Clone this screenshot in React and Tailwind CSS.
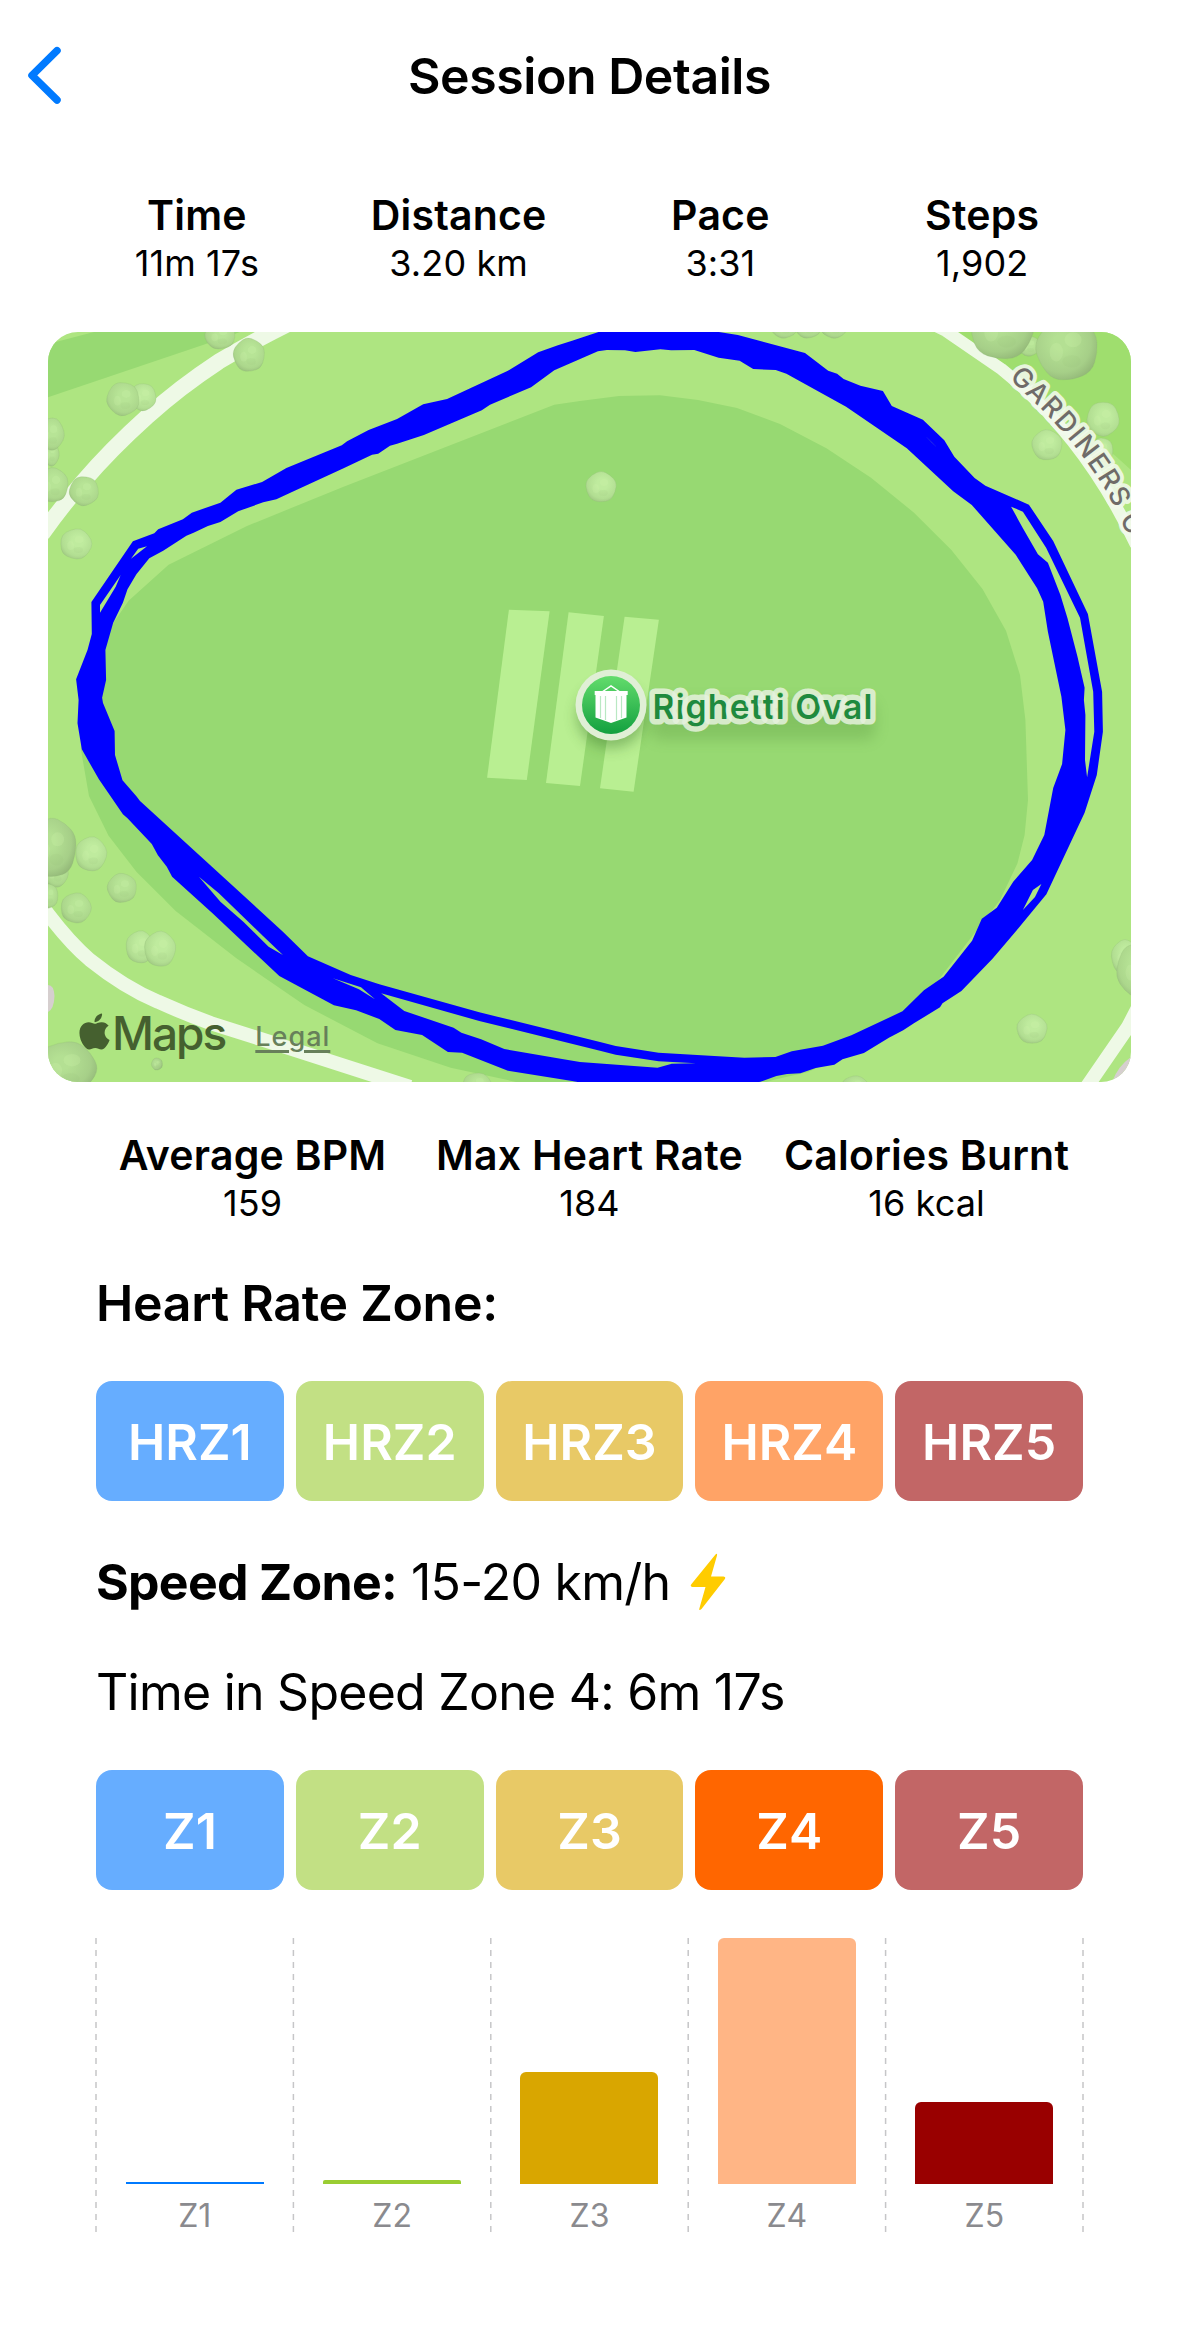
import { FaApple } from "react-icons/fa";

const zoneColors = ["bg-[#66adff]", "bg-[#c2e084]", "bg-[#e8c966]", "bg-[#ffa366]", "bg-[#c26666]"];
const speedColors = ["bg-[#66adff]", "bg-[#c2e084]", "bg-[#e8c966]", "bg-[#ff6600]", "bg-[#c26666]"];

const bars = [
  { label: "Z1", height: 2, color: "bg-[#007aff]", round: "" },
  { label: "Z2", height: 4, color: "bg-[#9acd32]", round: "rounded-t-[2px]" },
  { label: "Z3", height: 112, color: "bg-[#d9a600]", round: "rounded-t-[6px]" },
  { label: "Z4", height: 246, color: "bg-[#ffb585]", round: "rounded-t-[6px]" },
  { label: "Z5", height: 82, color: "bg-[#990000]", round: "rounded-t-[6px]" },
];

// x, y, rx, ry, shade
const trees = [
  [220, 336, 15, 13, "m"],
  [249, 355, 15.5, 16.5, "m"],
  [143, 397, 13, 13.5, "l"],
  [123, 399, 16, 16.5, "m"],
  [51, 454, 8, 12, "m"],
  [51, 434, 13, 16, "m"],
  [53, 485, 15, 17, "m"],
  [84, 491, 14.5, 14.5, "m"],
  [76, 544, 15.5, 15, "l"],
  [601, 487, 15, 15, "l"],
  [784, 327, 13, 11, "m"],
  [808, 327, 13, 11, "m"],
  [834, 327, 13, 11, "m"],
  [1029, 346, 11, 10, "m"],
  [1002, 330, 31, 29, "d"],
  [1067, 349, 30.5, 31, "d"],
  [1103, 419, 16, 17, "l"],
  [1102, 450, 11, 12, "l"],
  [1047, 445, 15, 15, "l"],
  [56, 873, 12, 14, "m"],
  [53, 848, 23, 29, "d"],
  [91, 854, 15.5, 17, "l"],
  [49, 896, 9, 12, "m"],
  [122, 888, 14.5, 14.5, "m"],
  [76, 908, 15, 15, "m"],
  [140, 947, 14, 16, "l"],
  [160, 949, 15.5, 17.5, "l"],
  [66, 1068, 30, 26, "d"],
  [157, 1064, 5.5, 6, "d"],
  [477, 1084, 14, 11, "m"],
  [1125, 957, 13.5, 17, "l"],
  [1137, 970, 20, 26, "m"],
  [1032, 1029, 15, 14.5, "l"],
  [855, 1086, 13, 10, "m"],
];

function Tree({ x, y, rx, ry, shade }) {
  const n = 10;
  const pts = Array.from({ length: n }, (_, i) => {
    const a = (i / n) * Math.PI * 2 + x;
    const k = i % 2 ? 1.1 : 1.01;
    return [x + Math.cos(a) * rx * k, y + Math.sin(a) * ry * k];
  });
  const mids = pts.map((p, i) => {
    const q = pts[(i + 1) % n];
    return [(p[0] + q[0]) / 2, (p[1] + q[1]) / 2];
  });
  const d = `M${mids[n - 1]}` + pts.map((p, i) => `Q${p} ${mids[i]}`).join("") + "Z";
  return (
    <g>
      <path d={d} fill={`url(#tree-${shade})`} stroke="#8fb673" strokeOpacity="0.3" strokeWidth="0.8" />
      <ellipse cx={x + rx * 0.2} cy={y - ry * 0.3} rx={rx * 0.28} ry={ry * 0.24} fill="#d0f6ae" opacity="0.22" />
      <ellipse cx={x - rx * 0.35} cy={y + ry * 0.1} rx={rx * 0.22} ry={ry * 0.3} fill="#d0f6ae" opacity="0.2" />
      <ellipse cx={x + rx * 0.15} cy={y + ry * 0.4} rx={rx * 0.3} ry={ry * 0.2} fill="#8fbd72" opacity="0.1" />
    </g>
  );
}

function RouteMap() {
  return (
    <svg className="block h-full w-full" viewBox="48 332 1083 750">
      <defs>
        <radialGradient id="tree-l" cx="0.55" cy="0.4" r="0.62">
          <stop offset="0.3" stopColor="#bfeb9e" />
          <stop offset="0.8" stopColor="#b2de92" />
          <stop offset="1" stopColor="#a3cc85" />
        </radialGradient>
        <radialGradient id="tree-m" cx="0.55" cy="0.4" r="0.62">
          <stop offset="0.3" stopColor="#b7e496" />
          <stop offset="0.8" stopColor="#acd78c" />
          <stop offset="1" stopColor="#9cc37f" />
        </radialGradient>
        <radialGradient id="tree-d" cx="0.42" cy="0.4" r="0.64">
          <stop offset="0.2" stopColor="#b4e093" />
          <stop offset="0.75" stopColor="#a6cf88" />
          <stop offset="1" stopColor="#94b979" />
        </radialGradient>
        <linearGradient id="pin" x1="0" y1="0" x2="0" y2="1">
          <stop offset="0" stopColor="#63dc6c" />
          <stop offset="1" stopColor="#12a03f" />
        </linearGradient>
        <filter id="soft" x="-30%" y="-50%" width="160%" height="220%">
          <feGaussianBlur stdDeviation="7" />
        </filter>
        <path id="creek" d="M1009 378L1037 405Q1077 444 1104 488Q1120 514 1138 562" />
      </defs>
      <rect x="48" y="332" width="1083" height="750" fill="#aee581" />
      <path d="M48 344L94 332H240L208 343.3L48 397.3Z" fill="#97d972" />
      <path d="M950 332H1131V533Q1085 440 1001 370Z" fill="#9fde6e" />
      <path d="M1131 470Q1100 440 1060 418L1001 370Q1090 440 1131 533Z" fill="#aee581" />
      <path
        d="M580 401L619 396L660 395.3L698 400L737 408L780 424L826.4 448.3L871 477.7L914 512.7L951.4 550L982.5 589L1006 630.7L1020 675L1025.4 720L1028 800L1024.6 835L1017.5 863.3L1000 900L900 1030L808 1072L773 1080L740 1090H540L515 1081.7L450.7 1067.7L377.5 1043.3L304.3 1005L236.4 958.3L175.7 911L136.4 871.7L108.6 835.7L89 796L81 750L85 700L100 650L114 622L128.6 600.7L168.6 564.7L247 526L343.6 486.7L554.3 404.7Z"
        fill="#97d972"
      />
      <g fill="none" stroke="#eef9e6">
        <path strokeWidth="16" d="M290 323L272 332Q245 346 218.6 361.7Q180 387 147 416.7Q110 450 83 481.7Q62 506 42 534" />
        <path strokeWidth="14" d="M42 906L48 914Q70 943 90 960Q125 988 158 1001.7Q185 1014 211.4 1023.3L290 1048.3L393.6 1081.7L410 1087" />
        <path strokeWidth="14" d="M1086 1088L1128 1027L1140 1004" />
        <path strokeWidth="12" d="M932 324L946 331L1001.4 369Q1085 437 1136 545" />
      </g>
      <path d="M1112 1082Q1118 1066 1131 1057V1082Z" fill="#d6cfcf" />
      <path d="M48 985Q54 985 54.5 996Q54 1009 48 1012Z" fill="#d6cfcf" />
      {trees.map(([x, y, rx, ry, shade]) => (
        <Tree key={`${x}-${y}`} x={x} y={y} rx={rx} ry={ry} shade={shade} />
      ))}
      <g fill="#b9ef92">
        <path d="M508.9 609.7L549.6 611.3L526.8 780L487.1 777.7Z" />
        <path d="M568.6 612.3L603.9 616L580 786L546 783Z" />
        <path d="M624.6 616.7L658.9 619.7L633.6 791.7L600 788.3Z" />
      </g>
      <path
        fill="#0000ff"
        fillRule="evenodd"
        d="M76.1 679.3L87.5 650L91.8 634L91.4 602L132.9 541.3L154.3 533.3L158.2 529.3L182.9 519.3L191.8 512.7L220.4 502.7L236.4 489.7L262.1 482L286.4 468L341.8 445.3L347.1 441.3L368.6 430L397.1 419L423.2 404.3L447.1 399L507.9 370.7L538.2 352.3L557.9 345.3L572.1 340.7L600 331.5L640 326L715.7 331.5L737.9 335L805 353L828.2 370.7L837.1 373.7L843.6 379L860.4 385.7L882.9 391L891.8 406L922.9 419.7L944.3 440.3L954.3 456.7L974.6 478L985.4 485.7L1028.9 504.7L1053.2 541L1087.9 614L1102.1 691.7L1102.9 731.7L1096.8 775L1084.6 812.7L1046.4 894.3L1018.6 928L992.5 958.7L961.4 991L942.5 1003.3L940 1007.3L913.9 1023.3L903.2 1030.3L888.9 1037.7L863.9 1053L842.5 1059.3L834.3 1064.7L815.7 1068L800.4 1073.3L787 1074L776.4 1076L760.4 1081.7L740 1086H600L572.1 1081L507.9 1070.7L462.1 1052.7L447.9 1052L422.1 1035L395.4 1030L379.3 1019L356.1 1010.3L333.9 1005.3L279.3 976L212.5 913.3L172.1 876.7L166.8 866.7L157.9 855.3L151.8 844L127.5 818.3L122.9 814.3L98.9 779.3L81.8 749.3L77.5 723.3L78.6 700Z
        M102.1 697.7L106.1 680L105.4 650L113.2 622.7L122.9 602.7L127.5 589.3L136.4 574.3L149.3 558.3L163.2 550.7L186.4 535.7L193.6 532.7L207.9 526L220.4 522L238.2 511.3L263.2 502.3L276.4 499.3L288.2 493.7L343.6 468.3L372.1 454.7L378.2 453.7L390 445.7L397.1 443.7L423.9 435L481.8 410.3L490 404.7L531.1 387.3L554.3 370.3L597.9 351.3L606.8 350L625 350.3L635.4 352L660.4 349.3L671.1 350.3L694.3 350L718.6 357.7L739.6 360.7L753.2 369L775.7 370L786.4 373.7L846.1 406.7L906.8 448.3L953.2 491.3L971.8 505L1015.7 554.7L1037.1 588.3L1043.2 601.7L1047.9 631.7L1061.4 696.7L1065.4 730L1062.1 764L1053.2 788L1044.3 835L1032.1 860L1013.2 881.7L996.8 907.7L981.8 918.7L972.1 940.7L943.6 976.7L923.9 990.3L902.5 1011.3L851.4 1035.3L822.9 1045.7L791.8 1051.3L775.4 1057L744.3 1057.7L658.6 1052.7L615.7 1046L600 1042L479.3 1012.3L379.3 984.3L350.7 975L307.9 956.3L282.9 931.7L140 801L136.4 796.3L122.5 780.3L115 755L114.6 731L103 703Z
        M147 546.3L138.2 548.7L131 558.7Z M120.7 575L100 605L100 612.7L115.7 586.7Z
        M1011.1 506.7L1022.9 511.7L1046.1 547.7L1080 617.7L1093.2 691.7L1094.3 731.7L1087.1 777.3L1085 760L1085.4 715L1083.9 700L1084.6 687.7L1077.5 656.7L1067.5 618.3L1060.4 595L1047.9 562.7L1037.9 554.3L1022.9 528.3Z
        M924 434.5L937.5 448L932 442.8Z M1041.4 884L1032.9 890L1022.9 910L1035 897Z
        M198.9 876.7L220.4 901.7L243.6 922L268.6 946.7L282.9 955L263 936L218.6 893Z
        M332.9 978.3L358.9 989.3L375 999.3L361 987.3Z
        M381.1 993.3L479.3 1021L600 1050.7L615.7 1054.7L658.6 1061.3L696 1063.3L671.8 1063.7L657.5 1067.7L580 1062L562.1 1059L504.3 1049L481.1 1039.3L461.4 1032.7L453.6 1027.7L404.3 1011Z"
      />
      <text
        fontFamily="Inter, sans-serif"
        fontSize="27"
        fontWeight="500"
        fill="#6f6b68"
        stroke="#f2f9ec"
        strokeOpacity="0.9"
        strokeWidth="8"
        strokeLinejoin="round"
        paintOrder="stroke"
        letterSpacing="1.8"
      >
        <textPath href="#creek">GARDINERS C</textPath>
      </text>
      <ellipse cx="611" cy="716" rx="34" ry="32" fill="#2f6a20" opacity="0.4" filter="url(#soft)" />
      <rect x="650" y="700" width="226" height="40" rx="10" fill="#3f7a2c" opacity="0.22" filter="url(#soft)" />
      <circle cx="611" cy="705" r="35.5" fill="#e0efd6" />
      <circle cx="611" cy="705" r="29" fill="url(#pin)" />
      <path d="M602 692L611 686L620 692" fill="none" stroke="#fff" strokeWidth="1.5" />
      <path d="M594.7 691H627.7V695H626.5V717.5L611 723L595.5 717.5V695H594.7Z" fill="#fff" />
      <path d="M600.5 696V718M605.500 696V720M616.500 696V720M621.500 696V718" stroke="#b9e8c3" strokeWidth="1.2" />
      <text
        x="652.5"
        y="719.3"
        fontFamily="Inter, sans-serif"
        fontSize="34"
        fontWeight="600"
        fill="#1f8a3e"
        stroke="#e6f2de"
        strokeOpacity="0.85"
        strokeWidth="11"
        strokeLinejoin="round"
        paintOrder="stroke"
        textLength="220"
      >
        Righetti Oval
      </text>
    </svg>
  );
}

function Stat({ label, value }) {
  return (
    <div className="flex flex-col items-center whitespace-nowrap">
      <div className="text-[41px] leading-[48px] font-semibold tracking-[0.2px]">{label}</div>
      <div className="text-[36px] leading-[48px] tracking-[0.1px]">{value}</div>
    </div>
  );
}

function ZoneRow({ prefix, colors }) {
  return (
    <div className="grid grid-cols-5 gap-3">
      {colors.map((color, i) => (
        <div
          key={color}
          className={`flex h-[120px] items-center justify-center rounded-[16px] pt-[2px] text-[50px] font-semibold text-white ${color}`}
        >
          {prefix}
          {i + 1}
        </div>
      ))}
    </div>
  );
}

function Chart() {
  return (
    <div className="relative h-[295px]">
      <svg className="absolute inset-0 h-full w-full overflow-visible" stroke="#c6c6c8" strokeWidth="1.5" strokeDasharray="6 6">
        {[0, 1, 2, 3, 4, 5].map((i) => (
          <line key={i} x1={`${i * 20}%`} x2={`${i * 20}%`} y1="0" y2="295" />
        ))}
      </svg>
      <div className="relative grid grid-cols-5">
        {bars.map((bar) => (
          <div key={bar.label} className="flex flex-col items-center">
            <div className="flex h-[246px] items-end">
              <div className={`w-[138px] ${bar.color} ${bar.round}`} style={{ height: bar.height }} />
            </div>
            <div className="mt-[9px] text-[32px] leading-[46px] text-[#8a8a8e]">{bar.label}</div>
          </div>
        ))}
      </div>
    </div>
  );
}

export default function App() {
  return (
    <div className="h-[2343px] w-[1179px] overflow-hidden bg-white font-['Inter',sans-serif] text-black">
      <header className="grid h-[191px] grid-cols-[1fr_auto_1fr] items-start">
        <svg className="mt-[45px] ml-[26px]" width="38" height="62" viewBox="0 0 38 62" fill="none" stroke="#007aff" strokeWidth="7.5" strokeLinecap="round" strokeLinejoin="round">
          <path d="M31 5.7L6 30.3L31 55" />
        </svg>
        <h1 className="text-[50px] leading-[152px] font-semibold tracking-[-0.45px]">Session Details</h1>
      </header>

      <section className="mx-[66px] grid h-[141px] grid-cols-4">
        <Stat label="Time" value="11m 17s" />
        <Stat label="Distance" value="3.20 km" />
        <Stat label="Pace" value="3:31" />
        <Stat label="Steps" value="1,902" />
      </section>

      <section className="relative mx-12 h-[750px] overflow-hidden rounded-[30px]">
        <RouteMap />
        <div className="absolute bottom-[22px] left-[31px] flex items-end text-[#45602f]">
          <FaApple className="mb-[8px] h-[41px] w-[31px]" />
          <span className="ml-[2px] text-[46px] leading-[54px] font-medium tracking-[-2px]">Maps</span>
          <span className="mb-[6px] ml-[30px] text-[27px] leading-[34px] font-medium tracking-[1px] text-[#67805a] underline decoration-[3px] underline-offset-[4px]">
            Legal
          </span>
        </div>
      </section>

      <section className="mx-[84px] mt-[49px] grid h-[94px] grid-cols-3">
        <Stat label="Average BPM" value="159" />
        <Stat label="Max Heart Rate" value="184" />
        <Stat label="Calories Burnt" value="16 kcal" />
      </section>

      <main className="mx-24">
        <h2 className="mt-[48px] text-[50px] leading-[60px] font-semibold tracking-[-0.3px]">Heart Rate Zone:</h2>
        <div className="mt-[48px]">
          <ZoneRow prefix="HRZ" colors={zoneColors} />
        </div>
        <div className="mt-[51px] flex h-[60px] items-center text-[50px] leading-[60px]">
          <span className="font-bold tracking-[-0.7px]">Speed Zone:</span>
          <span className="ml-[14px] tracking-[-0.75px]">15-20 km/h</span>
          <svg className="ml-[19px]" width="38" height="58" viewBox="0 0 38 58" fill="#ffcc00">
            <path d="M26.5 1.5Q28.5 -0.5 28 2.5L22 23.5H34.5Q37.5 24 35.5 26.5L12.5 56Q9.5 58.5 10.5 55L16.5 34H3.5Q0.5 33.5 2.5 31Z" />
          </svg>
        </div>
        <p className="mt-[50px] text-[50px] leading-[60px] tracking-[-0.75px]">Time in Speed Zone 4: 6m 17s</p>
        <div className="mt-[48px] mb-12">
          <ZoneRow prefix="Z" colors={speedColors} />
        </div>
        <Chart />
      </main>
    </div>
  );
}
